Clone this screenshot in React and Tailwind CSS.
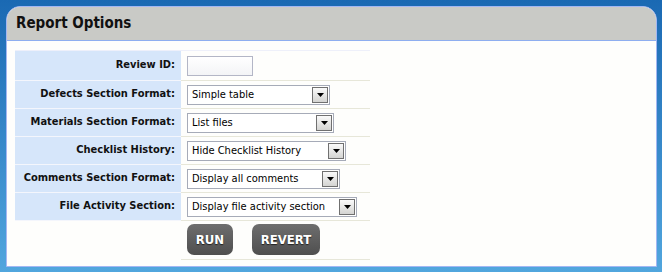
const rows = [
  { label: 'Defects Section Format:', value: 'Simple table', width: 'w-[143px]' },
  { label: 'Materials Section Format:', value: 'List files', width: 'w-[147px]' },
  { label: 'Checklist History:', value: 'Hide Checklist History', width: 'w-[159px]' },
  { label: 'Comments Section Format:', value: 'Display all comments', width: 'w-[153px]' },
  { label: 'File Activity Section:', value: 'Display file activity section', width: 'w-[170px]' },
];

const Select = ( { value, width } ) => (
  <div className={ `${ width } h-[20px] border border-[#a6abb8] bg-white flex items-center justify-between pl-[4px] pr-[1px]` }>
    <span className="text-[11px] text-black leading-none">{ value }</span>
    <span className="w-[16px] h-[16px] border border-[#707070] bg-gradient-to-b from-[#fafafa] to-[#d4d4d2] flex items-center justify-center">
      <svg width="7" height="4" viewBox="0 0 7 4">
        <path d="M0 0h7L3.5 4z" fill="#000" />
      </svg>
    </span>
  </div>
);

const Label = ( { children, tall } ) => (
  <div className={ `w-[166px] ${ tall ? 'h-[30px]' : 'h-[28px]' } bg-[#d6e6fa] border-b border-[#f4f6fc] flex items-center justify-end pr-[6px] font-bold text-[11px] text-[#111]` }>
    { children }
  </div>
);

const Cell = ( { children, tall } ) => (
  <div className={ `w-[189px] ${ tall ? 'h-[30px]' : 'h-[28px]' } border-b border-[#e7e7d9] flex items-center pl-[6px]` }>
    { children }
  </div>
);

export default function App() {
  return (
    <div className="w-[662px] h-[272px] bg-gradient-to-b from-[#1a69b3] to-[#51a6de] pt-[6px] px-[6px] font-['DejaVu_Sans_Condensed','DejaVu_Sans',sans-serif] [font-stretch:condensed]">
      <div className="w-[651px] h-[261px] rounded-t-[14px] border border-[#a3b7f3] bg-[#fefefc] overflow-hidden">
        <div className="h-[34px] bg-[#c9cac6] border-b border-[#8eaef0] pl-[9px] flex items-center">
          <h1 className="text-[15px] font-bold text-[#111] leading-none">Report Options</h1>
        </div>
        <div className="pl-[8px] pt-[9px]">
          <div className="w-[355px] border-t border-[#eef0fa]">
            <div className="flex">
              <Label tall>Review ID:</Label>
              <Cell tall>
                <div className="w-[66px] h-[20px] border border-[#b3b6c6] bg-gradient-to-b from-[#ffffff] to-[#f3f4f6]" />
              </Cell>
            </div>
            { rows.map( ( row ) => (
              <div className="flex" key={ row.label }>
                <Label>{ row.label }</Label>
                <Cell>
                  <Select value={ row.value } width={ row.width } />
                </Cell>
              </div>
            ) ) }
            <div className="flex">
              <div className="w-[166px] h-[39px]" />
              <div className="w-[189px] h-[39px] border-b border-[#e7e7d9] pl-[6px] pt-[3px] flex gap-[19px] items-start">
                <button className="w-[46px] h-[31px] rounded-[7px] bg-gradient-to-b from-[#6e6e6e] to-[#4f4f4f] text-white font-bold text-[13px] [text-shadow:0_1px_1px_#222]">
                  RUN
                </button>
                <button className="w-[68px] h-[31px] rounded-[7px] bg-gradient-to-b from-[#6e6e6e] to-[#4f4f4f] text-white font-bold text-[13px] [text-shadow:0_1px_1px_#222]">
                  REVERT
                </button>
              </div>
            </div>
          </div>
        </div>
      </div>
    </div>
  );
}
